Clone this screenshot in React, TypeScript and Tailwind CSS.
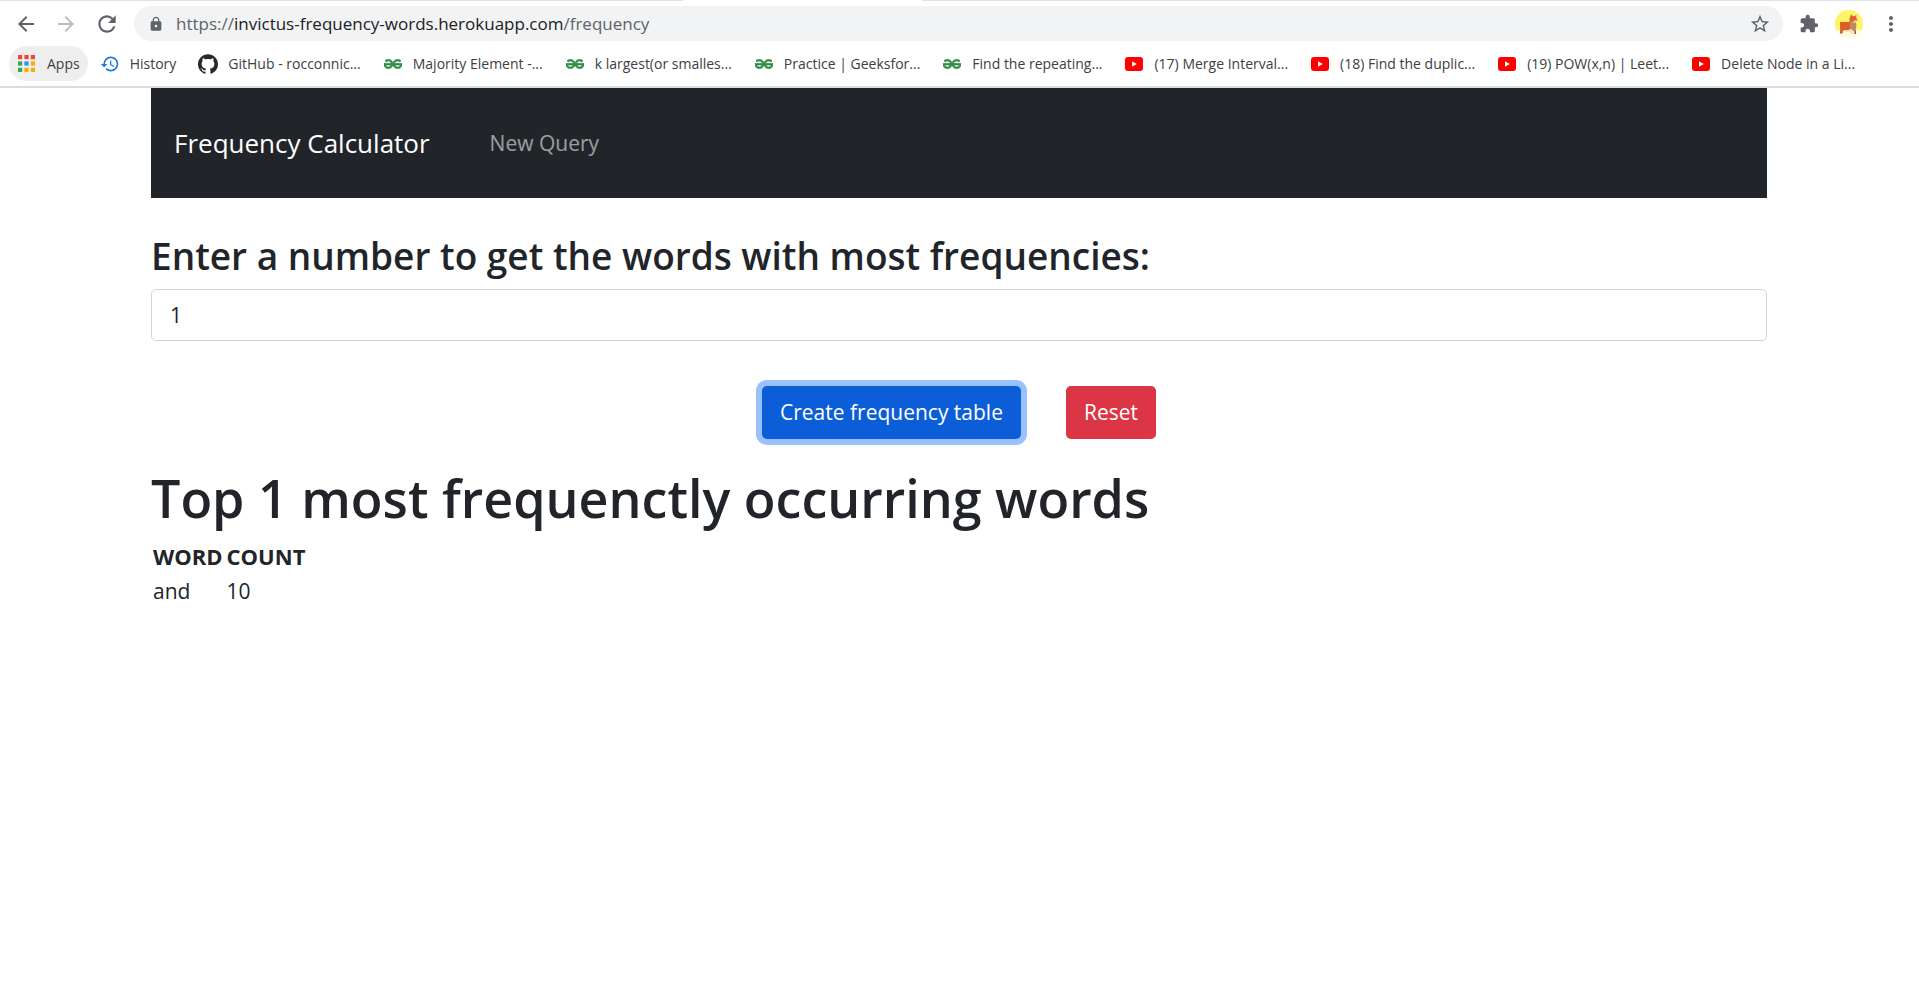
import { useState } from "react";
import type { ReactNode } from "react";
import {
  MdArrowBack,
  MdArrowForward,
  MdExtension,
  MdHistory,
  MdLock,
  MdMoreVert,
  MdRefresh,
  MdStarBorder,
} from "react-icons/md";
import { SiGeeksforgeeks, SiGithub } from "react-icons/si";

function AppsIcon() {
  const colors = [
    "#f44336", "#f44336", "#f44336",
    "#34a853", "#2196f3", "#fbab08",
    "#34a853", "#fbab08", "#fbab08",
  ];
  return (
    <svg viewBox="0 0 17 17" className="size-[17px]" aria-hidden="true">
      {colors.map((fill, i) => (
        <rect key={i} x={(i % 3) * 6.4} y={Math.floor(i / 3) * 6.4} width="4.2" height="4.2" fill={fill} />
      ))}
    </svg>
  );
}

function YouTubeIcon() {
  return (
    <svg viewBox="0 0 18 14" className="w-[18px]" aria-hidden="true">
      <rect width="18" height="14" rx="3" fill="#ff0000" />
      <path d="M7 4.2v5.6L11.8 7z" fill="#ffffff" />
    </svg>
  );
}

function Avatar() {
  return (
    <svg viewBox="0 0 28 28" className="size-7" aria-hidden="true">
      <circle cx="14" cy="14" r="14" fill="#fff466" />
      <path d="M1.300 20h25.400a14 14 0 0 1-25.400 0z" fill="#fffde0" />
      <path d="M5 13.500c0-1.500 1-2 2.500-1.500h8l2 1v7l-4 .5-4-.5-2 1.500v1.500H5.200z" fill="#dd5f28" />
      <path d="M14.500 8.500 16 4.500l2.500 2 3-1.500-.3 2.700 1.300 2.300-2 2-2.500.5-3.500-.5z" fill="#e4602a" />
      <path d="M15 12.500l3.500.5 2-1 1 3-1 6h-3l-2.500-3.500z" fill="#b98a66" />
      <path d="M18.500 10.500l3.500-.3-.8 2-2.200.3z" fill="#f3d6b8" />
      <path d="M9 20.500l5-.8 3-1.200 1 5.500h-1.700l-1-2.300-4.300.3z" fill="#f6dcc0" />
      <path d="M5.200 21.500h2v2h-2zM19.300 20.500h1.700V24h-1.700z" fill="#b9522a" />
    </svg>
  );
}

const gfg = <SiGeeksforgeeks className="size-[18px] stroke-[#2f8d46] stroke-1 text-[#2f8d46]" />;
const youtube = <YouTubeIcon />;

const bookmarks: { label: string; icon: ReactNode }[] = [
  { label: "History", icon: <MdHistory className="size-5 text-[#1a73e8]" /> },
  { label: "GitHub - rocconnic...", icon: <SiGithub className="size-5 text-[#24292e]" /> },
  { label: "Majority Element -...", icon: gfg },
  { label: "k largest(or smalles...", icon: gfg },
  { label: "Practice | Geeksfor...", icon: gfg },
  { label: "Find the repeating...", icon: gfg },
  { label: "(17) Merge Interval...", icon: youtube },
  { label: "(18) Find the duplic...", icon: youtube },
  { label: "(19) POW(x,n) | Leet...", icon: youtube },
  { label: "Delete Node in a Li...", icon: youtube },
];

function BrowserChrome() {
  return (
    <header className="border-b-2 border-[#dadce0] bg-white">
      <div className="flex h-px">
        <div className="w-[683px] bg-[#dee1e6]" />
        <div className="w-[239px]" />
        <div className="flex-1 bg-[#dee1e6]" />
      </div>
      <div className="flex h-[45px] items-center pr-4 pl-3.5 text-[#5f6368]">
        <div className="flex items-center gap-4">
          <button type="button" aria-label="Back"><MdArrowBack className="size-6" /></button>
          <button type="button" aria-label="Forward"><MdArrowForward className="size-6 text-[#babcbe]" /></button>
          <button type="button" aria-label="Reload"><MdRefresh className="size-[26px]" /></button>
        </div>
        <div className="ml-3.5 flex h-[35px] flex-1 items-center rounded-full bg-[#f1f3f4] pr-3 pl-3.5">
          <MdLock className="size-4" />
          <p className="ml-3 flex-1 text-[17px] leading-6">
            https://<span className="text-[#202124]">invictus-frequency-words.herokuapp.com</span>/frequency
          </p>
          <button type="button" aria-label="Bookmark this page"><MdStarBorder className="size-[22px]" /></button>
        </div>
        <div className="ml-4 flex items-center gap-4">
          <button type="button" aria-label="Extensions"><MdExtension className="size-5" /></button>
          <button type="button" aria-label="Profile"><Avatar /></button>
          <button type="button" aria-label="Menu"><MdMoreVert className="size-6" /></button>
        </div>
      </div>
      <nav aria-label="Bookmarks" className="flex h-10 items-start overflow-hidden pl-[9px] text-[14px] whitespace-nowrap text-[#3c4043]">
        <a href="#apps" className="flex h-[35px] items-center gap-3 rounded-full bg-[#eeeeee] pr-2 pl-[9px]">
          <AppsIcon />
          Apps
        </a>
        <div className="ml-3 flex h-[35px] items-center gap-[22px]">
          {bookmarks.map((b) => (
            <a key={b.label} href="#bookmark" className="flex items-center gap-2.5">
              <span className="flex w-5 justify-center">{b.icon}</span>
              {b.label}
            </a>
          ))}
        </div>
      </nav>
    </header>
  );
}

export default function App() {
  const [count, setCount] = useState("1");
  return (
    <div className="min-h-screen bg-white font-['Segoe_UI','Open_Sans',sans-serif] text-[#212529]">
      <BrowserChrome />
      <div className="pr-[152px] pl-[151px] text-[21px] leading-[35px]">
        <nav className="flex h-[110px] items-center gap-[60px] bg-[#212529] px-[23px]">
          <a href="#home" className="text-[26px] text-white">Frequency Calculator</a>
          <a href="#new" className="text-white/55">New Query</a>
        </nav>
        <main>
          <form onSubmit={(e) => e.preventDefault()}>
            <label htmlFor="count" className="mt-[35px] block text-[37px] leading-[46px] font-semibold">
              Enter a number to get the words with most frequencies:
            </label>
            <input
              id="count"
              type="text"
              value={count}
              onChange={(e) => setCount(e.target.value)}
              className="mt-2.5 block h-[52px] w-full rounded-[5px] border border-[#ced4da] px-[18px] outline-none"
            />
            <div className="mt-[45px] flex justify-center gap-[45px]">
              <button type="submit" className="h-[53px] rounded-[5px] bg-[#0b5ed7] px-[18px] text-white ring-[6px] ring-[#98c1fe]">
                Create frequency table
              </button>
              <button type="button" className="h-[53px] rounded-[5px] bg-[#dc3545] px-[18px] text-white">
                Reset
              </button>
            </div>
          </form>
          <h1 className="mt-[25px] text-[52px] leading-[68px] font-semibold">Top 1 most frequenctly occurring words</h1>
          <table className="mt-[7px] text-left">
            <thead>
              <tr>
                <th className="px-0.5 py-0 text-[22px] font-bold">WORD</th>
                <th className="px-0.5 py-0 text-[22px] font-bold">COUNT</th>
              </tr>
            </thead>
            <tbody>
              <tr>
                <td className="px-0.5 py-0">and</td>
                <td className="px-0.5 py-0">10</td>
              </tr>
            </tbody>
          </table>
        </main>
      </div>
    </div>
  );
}
